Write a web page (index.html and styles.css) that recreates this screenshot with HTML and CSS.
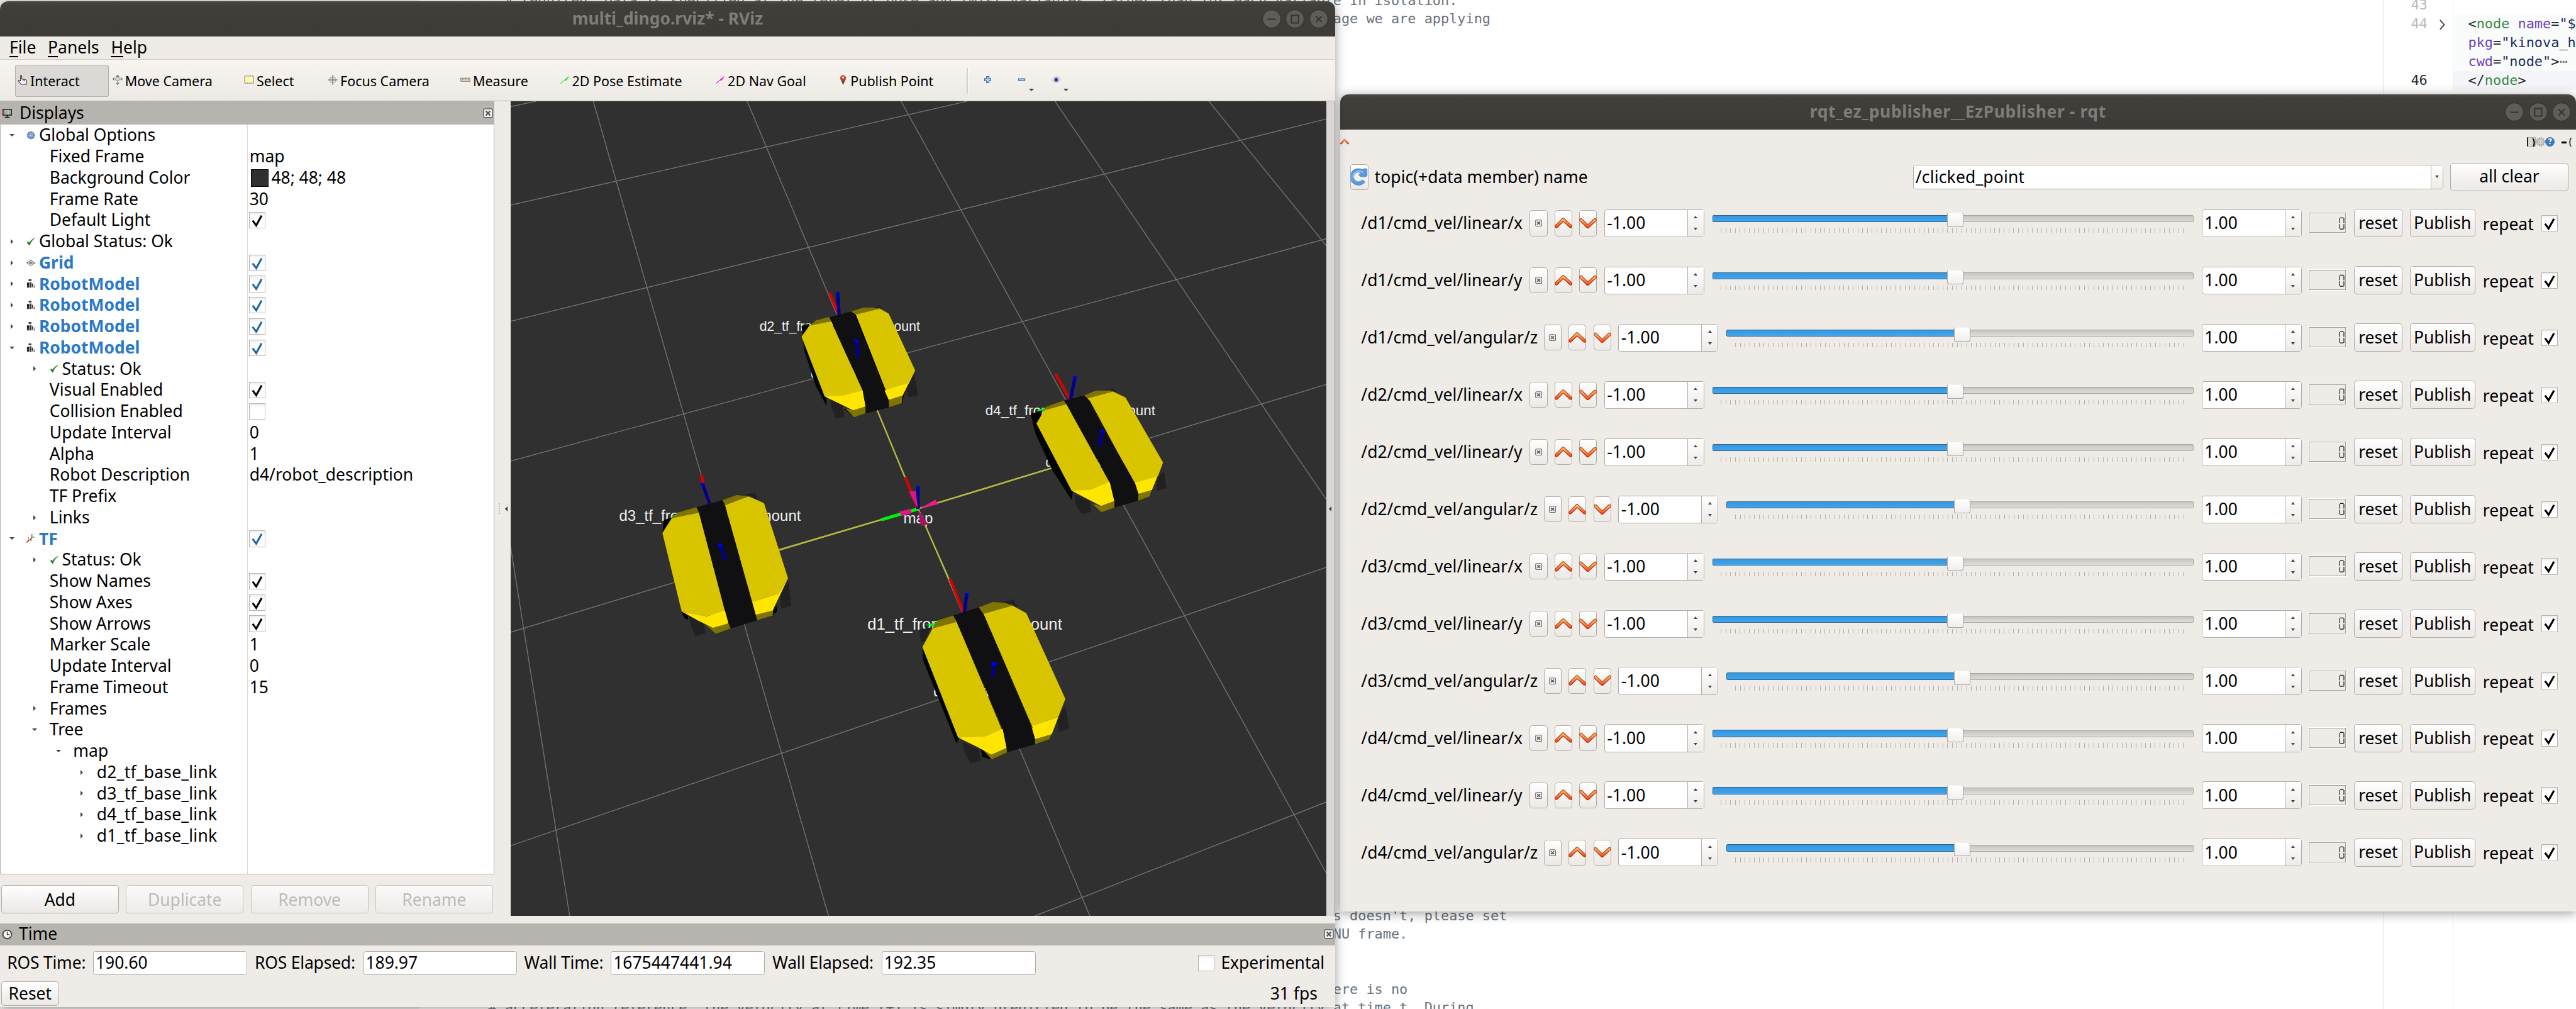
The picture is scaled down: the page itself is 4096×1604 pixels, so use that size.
FILE: index.html
```html
<!DOCTYPE html>
<html lang="en">
<head>
<meta charset="utf-8">
<title>Desktop</title>
<link rel="stylesheet" href="styles.css">
</head>
<body>
<svg class="defs" width="0" height="0">
  <defs>
    <linearGradient id="orange" x1="0" y1="0" x2="0" y2="1"><stop offset="0" stop-color="#c4561f"/><stop offset="1" stop-color="#cf2f10"/></linearGradient>
    <linearGradient id="orangeIn" x1="0" y1="0" x2="0" y2="1"><stop offset="0" stop-color="#f3b878"/><stop offset="1" stop-color="#ea6a2c"/></linearGradient>
    <linearGradient id="pin" x1="0" y1="0" x2="0" y2="1"><stop offset="0" stop-color="#ef5b45"/><stop offset="1" stop-color="#4d3a1c"/></linearGradient>
    <linearGradient id="refresh" x1="0" y1="0" x2="0" y2="1"><stop offset="0" stop-color="#4f8fd0"/><stop offset=".5" stop-color="#6ea9e0"/><stop offset="1" stop-color="#5a97d4"/></linearGradient>
    <linearGradient id="screen"><stop offset="0" stop-color="#c07070"/><stop offset=".35" stop-color="#d7a0a0"/><stop offset=".36" stop-color="#6fc07a"/><stop offset=".66" stop-color="#a8d8ac"/><stop offset=".67" stop-color="#8f8fe0"/><stop offset="1" stop-color="#b8b8ee"/></linearGradient>
  </defs>
  <symbol id="check" viewBox="0 0 28 28"><path d="M5.5 14.5l6.500 9L22 5.500" fill="none" stroke="currentColor" stroke-width="3.600"/></symbol>
  <symbol id="up" viewBox="0 0 30 30"><path d="M3 20L14.500 8.500 27 20" fill="none" stroke="url(#orange)" stroke-width="6" stroke-linecap="round" stroke-linejoin="round"/><path d="M3 19.500L14.500 8.500 27 19.500" fill="none" stroke="url(#orangeIn)" stroke-width="3" stroke-linecap="round" stroke-linejoin="round"/></symbol>
  <symbol id="down" viewBox="0 0 30 30"><path d="M3 9L14.500 20.500 27 9" fill="none" stroke="url(#orange)" stroke-width="6" stroke-linecap="round" stroke-linejoin="round"/><path d="M3 9L14.500 20 27 9" fill="none" stroke="url(#orangeIn)" stroke-width="3" stroke-linecap="round" stroke-linejoin="round"/></symbol>
  <symbol id="close" viewBox="0 0 12 12"><rect x=".8" y=".8" width="10.400" height="10.400" rx="1.500" fill="#f4f2ef" stroke="#666" stroke-width="1.200"/><path d="M3.500 3.500l5 5m0-5l-5 5" stroke="#555" stroke-width="1.800"/></symbol>
  <symbol id="gear" viewBox="0 0 16 16"><circle cx="8" cy="8" r="6.200" fill="#8db0dc" stroke="#3f6cae" stroke-width="2" stroke-dasharray="2 1.250"/><circle cx="8" cy="8" r="4.800" fill="#9fbfe6" stroke="#4b78b8"/><circle cx="8" cy="8" r="2" fill="#dfeafa" stroke="#3f6cae"/></symbol>
  <symbol id="ok" viewBox="0 0 16 16"><path d="M1.500 10l4 5Q8 7 15 1.500 8 5 5 10.500L3 8z" fill="#1c7d20" stroke="#1c7d20" stroke-width=".8"/></symbol>
  <symbol id="grid" viewBox="0 0 16 16"><path d="M1 8l7-4.500L15 8l-7 4.500zM4.500 5.700l7 4.600M11.500 5.700l-7 4.600" fill="none" stroke="#555" stroke-width="1.200"/></symbol>
  <symbol id="robot" viewBox="0 0 16 16"><path d="M4 0h5v3H4zM1 6h4v9H1zM6 5h3v10H6zM10 7l2 1v6h-2z" fill="#333"/><path d="M4.500 0h4v1.500h-4z" fill="#2b3aa0"/><path d="M12 14l2 1 2-6" fill="none" stroke="#333"/><path d="M2 7h2v3H2z" fill="#000"/></symbol>
  <symbol id="tf" viewBox="0 0 16 16"><path d="M4 11V5" stroke="#8080f0"/><path d="M10 6V0" stroke="#2a2ad0" stroke-width="1.200"/><path d="M10 5.500h6M4 11.500h6" stroke="#20e020" stroke-width="1.300"/><path d="M9 6.500l-4 4.500" stroke="#e8d020" stroke-width="1.600"/><path d="M4.500 11L0 15.500M10.500 5.500l-3.500 5" stroke="#e01818" stroke-width="1.800"/></symbol>
</svg>

<div class="desktop">
  <div class="backdrop">
    <div class="yaml">
<pre class="yaml-text yaml-top">  # required. Data is specified at the level of pose and twist variables, rather than for each variable in isolation.
  # For messages that have both pose and twist data, the parameter specifies to which part of the message we are applying</pre>
<pre class="yaml-text yaml-bottom">   # [ADVANCED]  Some IMUs automatically remove acceleration due to gravity, and others don't. If yours doesn't, please set
#     this to true, and *make sure* your data conforms to REP-103, specifically, that the data is in ENU frame.


# [ADVANCED]  The EKF and UKF models follow a standard predict/correct cycle. During prediction, if there is no
# acceleration reference, the velocity at time t+1 is simply predicted to be the same as the velocity at time t. During</pre>
    </div>
    <div class="xml">
      <div class="gutter"><span>43</span><span>44</span><span></span><span></span><span class="cur">46</span></div>
      <div class="fold"><svg width="14" height="20" viewBox="0 0 14 20"><path d="M3 2l7 8-7 8" fill="none" stroke="#444" stroke-width="2"/></svg></div>
      <div class="code">
        <div class="line">&nbsp;</div>
        <div class="line folded">&lt;<i>node</i> <b>name</b>=<s>"$(</s></div>
        <div class="line folded"><b>pkg</b>=<s>"kinova_h</s></div>
        <div class="line folded"><b>cwd</b>=<s>"node"</s>&gt;<em>⋯</em></div>
        <div class="line current">&lt;/<i>node</i>&gt;</div>
      </div>
    </div>
  </div>

  <section class="window rqt">
    <header class="titlebar"><h1>rqt_ez_publisher__EzPublisher - rqt</h1><div class="controls"></div></header>
    <div class="rqt-tools">
      <svg width="15" height="16" viewBox="0 0 30 30" preserveAspectRatio="none"><use href="#up"/></svg>
      <div class="dock-icons">
        <span class="dock-d">)</span>
        <svg width="16" height="16" viewBox="0 0 16 16"><circle cx="8" cy="8" r="6.500" fill="#d5d5d3" stroke="#a5a5a3" stroke-width="2.500" stroke-dasharray="2.200 1.200"/><circle cx="8" cy="8" r="4.500" fill="#dcdcda" stroke="#aaa"/><circle cx="8" cy="8" r="1.800" fill="#eee" stroke="#999"/></svg>
        <span class="help">?</span>
        <span class="dash"></span><span class="paren">(</span>
      </div>
    </div>
    <div class="topic-row">
      <button class="icon-btn"><svg width="30" height="32" viewBox="0 0 30 32"><path d="M23 22.500A11 11 0 1 1 21 8" fill="none" stroke="url(#refresh)" stroke-width="7"/><path d="M15 14.500q-2-4 2-4.500l4-1.500-1-5 4.500-2 4.500 1v12q-1 2-4 2h-7z" fill="#5a99d6"/><path d="M22 9a10 10 0 0 0-17 8" fill="none" stroke="#9cc6ee" stroke-width="2"/></svg></button>
      <span class="topic-label">topic(+data member) name</span>
      <div class="combo"><span>/clicked_point</span><i class="drop"></i></div>
      <button class="btn clear">all clear</button>
    </div>
    <div class="sliders" id="sliders"></div>
  </section>

  <section class="window rviz">
    <header class="titlebar"><h1>multi_dingo.rviz* - RViz</h1><div class="controls"></div></header>
    <nav class="menu"><span><u>F</u>ile</span><span><u>P</u>anels</span><span><u>H</u>elp</span></nav>
    <div class="toolbar">
      <div class="tool active"><svg width="17" height="17" viewBox="0 0 17 17"><path d="M5 10V1.500q1-1.500 2 0V7l7 1.500q1 0 1 2V16H6L1.500 10.500q0-2 2-.5z" fill="#fff" stroke="#333" stroke-width="1.200"/><path d="M9.500 7.500v3M12 8v3" stroke="#333"/></svg>Interact</div>
      <div class="tool"><svg width="17" height="17" viewBox="0 0 17 17"><path d="M8.500 1v15M1 7h15M6 3.500l2.500-3 2.500 3M6 13.500l2.500 3 2.500-3M3 4.500L.5 7 3 9.500M14 4.500L16.500 7 14 9.500" fill="none" stroke="#777" stroke-width="1.200"/><circle cx="8.500" cy="7" r="3.500" fill="#ddd" stroke="#888"/></svg>Move Camera</div>
      <div class="tool"><svg width="17" height="17" viewBox="0 0 17 17"><rect x="1" y="2" width="15" height="12" fill="#fdf6b4" stroke="#444" stroke-dasharray="2 1"/></svg>Select</div>
      <div class="tool"><svg width="17" height="17" viewBox="0 0 17 17"><path d="M8.500 0v17M0 8.500h17" stroke="#888" stroke-width="1.600"/><circle cx="8.500" cy="8.500" r="5" fill="none" stroke="#999" stroke-width="1.500"/><circle cx="8.500" cy="8.500" r="2" fill="#888"/></svg>Focus Camera</div>
      <div class="tool"><svg width="17" height="17" viewBox="0 0 17 17"><rect x=".7" y="5.500" width="15.500" height="5.500" fill="#e4dcb4" stroke="#777"/><path d="M3.500 6v3M6 6v2M8.500 6v3M11 6v2M13.500 6v3" stroke="#777"/></svg>Measure</div>
      <div class="tool"><svg width="17" height="17" viewBox="0 0 17 17"><path d="M1 14.500L16.500 1 11 10l-2-1-7 6z" fill="#12ea28"/></svg>2D Pose Estimate</div>
      <div class="tool"><svg width="17" height="17" viewBox="0 0 17 17"><path d="M1 14.500L16.500 1 11 10l-2-1-7 6z" fill="#f012d8"/></svg>2D Nav Goal</div>
      <div class="tool pub"><svg width="15" height="17" viewBox="0 0 15 17"><path d="M7 17L2.500 7.500A5 5 0 1 1 11.500 7.500z" fill="url(#pin)"/><circle cx="7" cy="4.500" r="1.500" fill="#fff"/></svg>Publish Point</div>
      <i class="sep"></i>
      <div class="tool small"><svg width="12" height="12" viewBox="0 0 12 12"><path d="M4 .7h4V4h3.300v4H8v3.300H4V8H.7V4H4z" fill="#a9cdf0" stroke="#3568ac" stroke-width="1.300"/></svg></div>
      <div class="tool small more"><svg width="12" height="12" viewBox="0 0 12 12"><rect x=".7" y="4.500" width="10.600" height="3" fill="#a9cdf0" stroke="#3568ac" stroke-width="1.300"/></svg></div>
      <div class="tool small more"><svg width="16" height="12" viewBox="0 0 16 12"><path d="M.5 6Q8-4 15.500 6 8 15 .5 6z" fill="#f0f0f0" stroke="#aaa"/><circle cx="8" cy="6" r="3.700" fill="#5a70c0"/><circle cx="8" cy="6" r="1.600" fill="#101030"/></svg></div>
    </div>
    <div class="work">
      <div class="displays">
        <div class="dock-title"><svg width="16" height="17" viewBox="0 0 16 17"><rect x=".8" y="1.800" width="14.400" height="10" fill="url(#screen)" stroke="#111" stroke-width="1.400"/><path d="M8 12v3M4 15.500h8" stroke="#111" stroke-width="1.600"/></svg><span>Displays</span><svg class="x" width="17" height="17"><use href="#close"/></svg></div>
        <div class="tree" id="tree"></div>
        <div class="tree-buttons"><button class="btn">Add</button><button class="btn" disabled>Duplicate</button><button class="btn" disabled>Remove</button><button class="btn" disabled>Rename</button></div>
      </div>
      <div class="splitter"><i class="dots"></i><i class="tri-left"></i></div>
      <svg class="view" width="1383" height="1381" viewBox="866 172 1383 1381">
        <g stroke="#727272" stroke-width="1.500" fill="none">
          <path d="M745 172L966 1553M1006 172L1405 1553M1267 172L1848 1553M1528 172L2289 1553M1789 172L2249 847M2050 172L2250 418"/>
          <path d="M866 181L909 172M866 348L1640 172M866 545L2249 202M866 782L2249 405M866 1072L2249 652M866 1434L2249 962M1755 1553L2249 1360"/>
        </g>
        <g class="labels">
          <text x="1288" y="561" font-size="24" textLength="272" lengthAdjust="spacingAndGlyphs">d2_tf_front_bumper_mount</text>
          <text x="1671" y="704" font-size="24" textLength="288" lengthAdjust="spacingAndGlyphs">d4_tf_front_bumper_mount</text>
          <text x="1050" y="883" font-size="25.500" textLength="308" lengthAdjust="spacingAndGlyphs">d3_tf_front_bumper_mount</text>
          <text x="1471" y="1068" font-size="27" textLength="330" lengthAdjust="spacingAndGlyphs">d1_tf_front_bumper_mount</text>
          <text x="1532" y="888" font-size="26" textLength="50" lengthAdjust="spacingAndGlyphs">map</text>
          <text x="1375" y="641" font-size="24" textLength="140" lengthAdjust="spacingAndGlyphs">d2_tf_base_link</text>
          <text x="1773" y="792" font-size="24" textLength="150" lengthAdjust="spacingAndGlyphs">d4_tf_base_link</text>
          <text x="1583" y="1181" font-size="26" textLength="170" lengthAdjust="spacingAndGlyphs">d1_tf_base_link</text>
        </g>
        <g transform="translate(1000 440) scale(.81633 .57398)">
          <g stroke="#b9b840" stroke-width="3.500" fill="none"><path d="M597 445L682 737L782 1060" stroke-width="3.200"/><path d="M393 858L682 737L965 614" stroke-width="4.500"/></g>
          <g class="ink">
            <path d="M606 769L682 737" stroke="#00f010" stroke-width="9"/>
            <path d="M655 643L682 737" stroke="#d80000" stroke-width="6"/>
            <path d="M682 673V737" stroke="#00008c" stroke-width="7"/><circle cx="682" cy="673" r="4" fill="#0000d8"/>
            <path d="M684 737l34-27 6 13z" fill="#f0188c"/><path d="M643 745l24-8 2 12-21 9z" fill="#e8148a"/>
            <path d="M663 686l14-2 5 53z" fill="#d81880"/><path d="M682 740l6 48 15-6z" fill="#a81068"/>
            <path d="M498 99L518 165M967 337L997 412M231 634L247 720M748 942L777 1046" stroke="#d80000" stroke-width="6"/>
            <path d="M930 444l20-6v16l-20-6zM168 758l24-6v16zM697 1080l25-8v14z" fill="#00f010"/>
            <path d="M515 99L518 165M1008 349L999 412M235 665L249 722M783 990L778 1046" stroke="#00008c" stroke-width="7"/>
            <g fill="#0000d8"><circle cx="515" cy="99" r="4"/><circle cx="1008" cy="349" r="4.500"/><circle cx="235" cy="665" r="4.500"/><circle cx="783" cy="990" r="4.500"/></g>
          </g>
          <g class="bot">
            <path class="k" d="M440 197L456 190 446 228 492 405 492 433 470 375 446 270zM528 440L549 448 549 466zM648 410L656 385 648 428z"/>
            <path class="w" d="M500 412L526 432 529 465 512 471 503 440zM655 372L674 340 682 402 662 408zM588 142L604 138 608 152z"/>
            <path class="y" d="M440 228L457 195 501 183 567 387 528 405 488 405zM548 164L602 145 621 160 676 328 662 368 612 387z"/>
            <path class="d" d="M457 196L470 180 498 170 501 183zM543 154L567 143 590 142 602 146 548 165zM531 440L547 446 573 433 573 454 549 466zM621 415L650 402 648 425 621 437z"/>
            <path class="b" d="M488 405L528 402 567 387 573 434 547 446 522 428zM612 387L661 366 676 328 650 402 621 415z"/>
            <path class="s" d="M498 171L543 154 548 164 612 387 621 415 622 437 573 455 573 434 567 387z"/>
            <path class="k" d="M543 154l5 10 64 223 3 0L553 164z"/>
          </g>
          <g class="bot">
            <path class="k" d="M916 457L940 446 932 485 1004 683 1001 711 960 620 926 515zM1140 690L1168 680 1163 700z"/>
            <path class="w" d="M1007 695L1038 712 1042 746 1022 753 1010 725zM1178 645L1193 626 1198 676 1178 684zM1066 386L1088 381 1095 395z"/>
            <path class="y" d="M928 485L945 444 990 427 1082 665 1040 690 1001 683zM1034 410L1087 390 1113 408 1191 600 1180 641 1132 662z"/>
            <path class="d" d="M936 456L950 434 985 417 990 428 945 446zM1027 402L1050 388 1080 387 1087 390 1034 411zM1044 722L1062 728 1090 714 1090 733 1063 747zM1139 692L1168 680 1163 700 1139 713z"/>
            <path class="b" d="M1001 683L1040 681 1080 657 1090 714 1062 728 1037 710zM1132 660L1179 641 1191 600 1168 681 1139 693z"/>
            <path class="s" d="M985 417L1027 402 1034 411 1132 660 1140 692 1139 713 1090 733 1090 716 1081 660 990 427z"/>
            <path class="k" d="M1027 402l7 9 98 249 5 16L1039 418z"/>
          </g>
          <g class="bot">
            <path class="k" d="M154 770L180 758 151 808zM189 1030L205 1045 204 1064 196 1060zM375 1056L388 1020 389 1040z"/>
            <path class="w" d="M206 1050L236 1072 240 1104 219 1113 210 1080zM395 985L412 945 419 1022 398 1032zM322 695L343 688 350 710z"/>
            <path class="y" d="M151 808L171 763 227 748 281 1040 240 1055 191 1040zM281 725L330 700 362 720 412 942 391 988 337 1012z"/>
            <path class="d" d="M163 778L182 748 222 732 227 748 171 765zM276 711L305 696 330 700 281 727zM240 1078L254 1087 290 1074 293 1090 262 1106zM344 1050L381 1036 380 1052 347 1066z"/>
            <path class="b" d="M191 1040L242 1055 281 1037 290 1074 256 1088 225 1067zM337 1012L391 988 412 942 380 1037 344 1050z"/>
            <path class="s" d="M222 732L276 711 281 727 345 1050 348 1066 293 1090 288 1074 227 748z"/>
          </g>
          <g class="bot">
            <path class="k" d="M691 1145L692 1182 762 1430 770 1412zM812 1445L836 1463 834 1477 816 1470zM955 1415L968 1370 958 1412z"/>
            <path class="w" d="M684 1095L708 1087 697 1128 688 1130zM774 1425L808 1448 812 1480 791 1488 780 1460zM970 1350L988 1320 996 1386 975 1396zM858 1011L880 1004 888 1028z"/>
            <path class="y" d="M691 1145L713 1088 762 1070 858 1395 820 1415 765 1412zM815 1047L875 1020 907 1045 988 1298 973 1352 917 1378z"/>
            <path class="d" d="M707 1100L722 1067 755 1052 762 1071 713 1090zM808 1028L838 1012 862 1015 880 1022 815 1048zM818 1450L834 1463 866 1443 867 1456 835 1477zM925 1417L960 1401 955 1417 925 1432z"/>
            <path class="b" d="M765 1412L820 1410 858 1387 866 1443 834 1463 805 1440zM917 1378L973 1352 988 1298 960 1402 925 1417z"/>
            <path class="s" d="M755 1052L808 1028 815 1047 917 1378 925 1417 925 1432 867 1456 866 1443 858 1387 762 1070z"/>
            <path class="k" d="M808 1028l7 19 102 331 5 12L819 1050z"/>
          </g>
          <g class="ink">
            <path d="M554 240L557 290M1065 506L1058 552M271 843L281 887M840 1193L837 1232" stroke="#00008c" stroke-width="7"/>
            <g fill="#0000d8"><circle cx="554" cy="241" r="5"/><circle cx="1065" cy="507" r="5"/><circle cx="271" cy="844" r="5.500"/><circle cx="840" cy="1194" r="6"/></g>
          </g>
        </g>
      </svg>
      <div class="edge"><i class="tri-left"></i></div>
    </div>
    <div class="dock-title time-title"><svg width="18" height="18" viewBox="0 0 18 18"><circle cx="9" cy="9" r="7.300" fill="#fff" stroke="#444" stroke-width="2"/><path d="M9 4v5.500h4" fill="none" stroke="#333" stroke-width="1.500"/></svg><span>Time</span><svg class="x" width="17" height="17"><use href="#close"/></svg></div>
    <div class="time-row">
      <label>ROS Time:</label><div class="field">190.60</div>
      <label>ROS Elapsed:</label><div class="field">189.97</div>
      <label>Wall Time:</label><div class="field">1675447441.94</div>
      <label>Wall Elapsed:</label><div class="field">192.35</div>
      <div class="experimental"><i class="box"></i>Experimental</div>
    </div>
    <div class="status"><button class="btn">Reset</button><span>31 fps</span></div>
  </section>
</div>
<script src="app.js"></script>
</body>
</html>
```
FILE: styles.css
```css
* { box-sizing: border-box; }
body { margin: 0; overflow: hidden; background: #fff; }
.defs { position: absolute; }
.desktop {
  zoom: 0.93773;
  position: relative;
  width: 4368px;
  height: 1711px;
  overflow: hidden;
  font: 28.2px/36px "Noto Sans", sans-serif;
  color: #000;
}
i, em, s { font-style: normal; text-decoration: none; }
svg { flex: none; display: block; }

/* editor behind the windows */
.backdrop { display: flex; height: 100%; font: 23.35px/31.2px "DejaVu Sans Mono", monospace; color: #6a737d; }
.yaml { flex: none; width: 4042px; padding: 0 0 0 828px; display: flex; flex-direction: column; justify-content: space-between; box-shadow: inset 710px 0 #eef0f1; }
.yaml-text { margin: 0; font: inherit; }
.yaml-top { margin-top: -15px; }
.yaml-bottom { margin-bottom: -13px; }
.xml { display: flex; flex: 1; overflow: hidden; border-left: 2px solid #dcdee0; line-height: 32px; }
.gutter { flex: none; width: 73px; display: flex; flex-direction: column; text-align: right; color: #b9bbbd; margin-top: -7px; }
.gutter span { height: 32px; }
.gutter .cur { color: #24292e; }
.fold { flex: none; width: 43px; padding: 32px 0 0 18px; }
.code { flex: 1; overflow: hidden; margin-top: -7px; border-left: 2px solid #f0f1f2; color: #24292e; }
.line { height: 32px; padding-left: 25px; white-space: pre; }
.line.folded { background: #fafbfb; }
.line.current { background: #f3f5f8; }
.line i { color: #3f8a46; }
.line b { color: #6f42c1; font-weight: normal; }
.line s { color: #1c2f5e; }
.line em { color: #777; }

/* windows */
.window { position: absolute; background: #efebe7; box-shadow: 0 3px 18px rgba(0,0,0,.38); border-radius: 14px 14px 0 0; display: flex; flex-direction: column; }
.rviz { left: 0; top: 2px; width: 2264px; height: 1705px; }
.rqt { left: 2272px; top: 160px; width: 2096px; height: 1385px; }
.titlebar { flex: none; height: 60px; border-radius: 14px 14px 0 0; background: linear-gradient(#4a4943, #403f3a 10%, #3c3b37); display: flex; align-items: center; justify-content: center; position: relative; }
.titlebar h1 { margin: 0; font-size: 28.2px; font-weight: bold; color: #807d78; }
.rqt .titlebar h1 { letter-spacing: .65px; }
.controls { position: absolute; right: 8px; display: flex; gap: 8px; }
.rviz .controls { right: 12px; }
.controls svg { width: 32px; height: 32px; }

.btn, .icon-btn { font: inherit; color: inherit; padding: 0; border: 2px solid #b0aca8; border-radius: 5px; background: linear-gradient(#fff, #ebe8e5); display: flex; align-items: center; justify-content: center; flex: none; }
.btn:disabled { color: #bdbbb9; border-color: #c6c3c0; background: linear-gradient(#fbfaf9, #eeebe8); }
.box { display: block; flex: none; width: 28px; height: 28px; border: 1.5px solid #b8b5b2; background: linear-gradient(#eee, #fff 25%); color: #000; }
.box svg { width: 100%; height: 100%; }

/* rviz */
.menu { flex: none; height: 39px; padding-left: 16px; display: flex; gap: 20px; border-bottom: 2px solid #d3cec9; align-items: center; }
.menu u { text-underline-offset: 4px; text-decoration-thickness: 2px; }
.toolbar { flex: none; height: 71px; padding: 2px 0 0 26px; display: grid; grid-template-columns: 160px 223px 142px 225px 168px 264px 210px 221px 7px 58px 58px 58px; align-items: center; background: linear-gradient(#f8f5f0, #edeae6); border-bottom: 2px solid #b5b0ab; font-size: 22.9px; }
.tool { height: 55px; display: flex; align-items: center; gap: 4px; padding-left: 5px; white-space: nowrap; }
.tool svg { margin-top: -4px; }
.tool.active { width: 158px; border: 1.5px solid #b3afab; border-radius: 3px; background: #dcd8d5; padding-left: 3px; }
.sep { width: 2px; height: 43px; background: #d3cfcb; box-shadow: 1px 0 #fff; }
.tool.small { padding: 0; justify-content: center; position: relative; }
.more::after { content: ""; position: absolute; left: 41px; top: 41px; border: 4.500px solid transparent; border-top: 5px solid #444; border-bottom: 0; }
.work { flex: none; height: 1381px; display: flex; }
.displays { flex: none; width: 838px; display: flex; flex-direction: column; }
.dock-title { flex: none; height: 39px; background: #b7b3af; display: flex; align-items: center; padding: 0 2px 0 4px; gap: 13px; }
.dock-title .x { margin-left: auto; }
.tree { height: 1271px; background: #fff; border: solid #b5b1ad; border-width: 0 1.500px 1.500px; display: grid; grid-template-columns: 418px 1fr; grid-auto-rows: 36px; position: relative; align-content: start; }
.name, .value { display: flex; align-items: center; white-space: nowrap; }
.name { position: relative; }
.value { padding: 1px 0 0 4px; }
.name { padding-top: 1px; }
.tree::before { content: ""; position: absolute; left: 418px; top: 0; bottom: 0; width: 1.500px; background: #dcdad8; }
.exp { flex: none; width: 18px; margin-right: 16px; display: flex; justify-content: center; align-items: center; }
.exp.open::before { content: ""; border: 5px solid transparent; border-top: 5px solid #444; border-bottom: 0; }
.exp.shut::before { content: ""; border: 5px solid transparent; border-left: 5px solid #444; border-right: 0; }
.name svg { margin-right: 6px; }
.lv0 { padding-left: 10px; } .lv1 { padding-left: 49px; } .lv2 { padding-left: 89px; } .lv3 { padding-left: 129px; letter-spacing: .25px; }
.hot { color: #2a78c8; font-weight: bold; font-size: 28.200px; }
.value.hot .box { color: #1f66a8; }
.value .box { margin-left: -1px; }
.swatch { width: 30px; height: 30px; margin: 0 5px 0 2px; background: #303030; border: 1.500px solid #000; }
.tree-buttons { display: flex; gap: 12px; padding: 19px 2px 0; }
.tree-buttons .btn { flex: 1; height: 48px; padding-top: 1px; }
.splitter { width: 28px; position: relative; display: flex; align-items: center; justify-content: flex-end; gap: 9px; padding-right: 5px; }
.dots { width: 2px; height: 18px; background: repeating-linear-gradient(#b5b1ad 0 2px, transparent 2px 4px); }
.tri-left { border: 5px solid transparent; border-right: 5px solid #333; border-left: 0; }
.view { background: #303030; }
.labels { fill: #f0f0f0; font-family: "Liberation Sans", sans-serif; }
.y { fill: #d8c500; } .d { fill: #807400; } .b { fill: #ffe600; } .s { fill: #101012; } .k { fill: #030404; } .w { fill: #212121; }
.edge { width: 15px; background: #dcd7d4; border-right: 1.500px solid #9c9894; display: flex; align-items: center; justify-content: center; border-radius: 3px; }
.time-title { margin-top: 12px; height: 38px; gap: 11px; padding-left: 3px; }
.time-row { flex: none; height: 58px; padding: 9px 18px 0 12px; display: grid; grid-template-columns: 146px 261px 13px 184px 261px 12px 147px 261px 13px 185px 261px 1fr; }
.time-row > * { height: 41px; display: flex; align-items: center; white-space: nowrap; padding-top: 1px; }
.time-row label:nth-of-type(1) { grid-column: 1; } .time-row label:nth-of-type(2) { grid-column: 4; }
.time-row label:nth-of-type(3) { grid-column: 7; } .time-row label:nth-of-type(4) { grid-column: 10; }
.time-row label { letter-spacing: -.2px; }
.time-row .field { background: #fff; border: 2px solid #b0aca8; border-radius: 4px; padding-left: 3px; }
.experimental { justify-content: flex-end; gap: 11px; }
.status { display: flex; justify-content: space-between; align-items: center; padding: 3px 30px 0 2px; }
.status .btn { width: 98px; height: 41px; }

/* rqt publisher */
.rqt-tools { height: 40px; padding-right: 4px; display: flex; align-items: center; justify-content: space-between; }
.dock-icons { display: flex; align-items: center; height: 16px; font-size: 17px; line-height: 16px; overflow: hidden; }
.dock-d { width: 15px; height: 16px; border: 1px solid #b3afab; border-left: 3px solid #222; background: #dcd8d5; text-align: right; font-weight: bold; }
.help { width: 16px; height: 16px; margin-right: 11px; border-radius: 50%; background: #3d7cb8; color: #fff; font-size: 13px; font-weight: bold; text-align: center; line-height: 15px; }
.dash { width: 9px; height: 4px; margin-top: 3px; background: #000; }
.paren { width: 8px; margin-left: 4px; }
.topic-row { flex: none; height: 80px; padding: 0 13px 0 18px; display: flex; align-items: center; }
.icon-btn { width: 30px; height: 44px; }
.topic-label { width: 913px; margin-left: 11px; padding-top: 1px; }
.combo { flex: 1; height: 42px; background: #fff; border: 2px solid #b0aca8; border-radius: 4px; display: flex; justify-content: space-between; align-items: center; padding-left: 3px; }
.combo span { padding-top: 1px; letter-spacing: .2px; }
.drop { width: 20px; height: 100%; border-left: 1.500px solid #b5b1ad; background: linear-gradient(#fff, #eeebe8); display: flex; align-items: center; justify-content: center; }
.drop::before { content: ""; border: 4px solid transparent; border-top: 5px solid #444; border-bottom: 0; }
.clear { width: 200px; height: 48px; margin-left: 12px; }
.sliders { padding: 0 31px 0 36px; margin-top: -10px; }
.srow { height: 97px; display: flex; align-items: center; gap: 12px; }
.topic { flex: none; width: 274px; white-space: nowrap; letter-spacing: .05px; padding-top: 1px; }
.wide .topic { width: 298px; }
.spin { flex: none; width: 170px; height: 47px; background: #fff; border: 2px solid #b0aca8; border-radius: 4px; display: flex; justify-content: space-between; align-items: center; padding-left: 4px; }
.spin span { padding-top: 1px; }
.arrows { width: 28px; height: 100%; border-left: 1.500px solid #b5b1ad; background: linear-gradient(#fff, #edeae7); display: flex; flex-direction: column; align-items: center; justify-content: center; gap: 16px; }
.arrows::before { content: ""; border: 4px solid transparent; border-bottom: 5px solid #444; border-top: 0; }
.arrows::after { content: ""; border: 4px solid transparent; border-top: 5px solid #444; border-bottom: 0; }
.slider { flex: 1; height: 35px; margin: 0 1px 0 2px; position: relative; display: flex; flex-direction: column; }
.groove { margin-top: 4px; height: 12px; border: 1.500px solid #aaa6a2; border-radius: 2px; background: linear-gradient(#c6c3c0, #dfdcd9); }
.fill { height: 12px; margin: -1.500px; border: 1.500px solid #2a6796; border-radius: 2px 0 0 2px; background: linear-gradient(#3a94d8, #3ea6f0); }
.knob { position: absolute; top: 0; width: 28px; height: 24px; margin-left: -14px; background: linear-gradient(#fff, #f1efed); border: 1.500px solid #aaa6a2; border-top-color: #f0f0f0; border-radius: 3px; }
.ticks { height: 8px; margin: 10px 13px 0 14px; background: repeating-linear-gradient(90deg, #b4b0ac 0 1.400px, transparent 1.400px 8px); }
.lcd { flex: none; width: 64px; height: 35px; border: 1.500px solid; border-color: #a39f9b #fff #fff #a39f9b; box-shadow: inset -1px -1px #a39f9b, -1px -1px #fff; display: flex; align-items: center; justify-content: flex-end; padding-right: 2px; }
.reset { width: 83px; height: 48px; }
.publish { width: 111px; height: 48px; }
.repeat { width: 87px; padding-top: 4px; margin-left: 1px; }
```
FILE: app.js
```js
const use = (id, size) => `<svg width="${size}" height="${size}"><use href="#${id}"/></svg>`;
const ON = `<i class="box">${use('check', 25)}</i>`;
const OFF = '<i class="box"></i>';

// [level, expander, icon, name, value, highlighted]
const rows = [
  [0, 'open', 'gear', 'Global Options', ''],
  [1, '', '', 'Fixed Frame', 'map'],
  [1, '', '', 'Background Color', '<i class="swatch"></i>48; 48; 48'],
  [1, '', '', 'Frame Rate', '30'],
  [1, '', '', 'Default Light', ON],
  [0, 'shut', 'ok', 'Global Status: Ok', ''],
  [0, 'shut', 'grid', 'Grid', ON, 1],
  [0, 'shut', 'robot', 'RobotModel', ON, 1],
  [0, 'shut', 'robot', 'RobotModel', ON, 1],
  [0, 'shut', 'robot', 'RobotModel', ON, 1],
  [0, 'open', 'robot', 'RobotModel', ON, 1],
  [1, 'shut', 'ok', 'Status: Ok', ''],
  [1, '', '', 'Visual Enabled', ON],
  [1, '', '', 'Collision Enabled', OFF],
  [1, '', '', 'Update Interval', '0'],
  [1, '', '', 'Alpha', '1'],
  [1, '', '', 'Robot Description', 'd4/robot_description'],
  [1, '', '', 'TF Prefix', ''],
  [1, 'shut', '', 'Links', ''],
  [0, 'open', 'tf', 'TF', ON, 1],
  [1, 'shut', 'ok', 'Status: Ok', ''],
  [1, '', '', 'Show Names', ON],
  [1, '', '', 'Show Axes', ON],
  [1, '', '', 'Show Arrows', ON],
  [1, '', '', 'Marker Scale', '1'],
  [1, '', '', 'Update Interval', '0'],
  [1, '', '', 'Frame Timeout', '15'],
  [1, 'shut', '', 'Frames', ''],
  [1, 'open', '', 'Tree', ''],
  [2, 'open', '', 'map', ''],
  [3, 'shut', '', 'd2_tf_base_link', ''],
  [3, 'shut', '', 'd3_tf_base_link', ''],
  [3, 'shut', '', 'd4_tf_base_link', ''],
  [3, 'shut', '', 'd1_tf_base_link', ''],
];
document.getElementById('tree').innerHTML = rows.map(([lv, exp, icon, name, value, hot]) =>
  `<div class="name lv${lv}${hot ? ' hot' : ''}"><i class="exp ${exp}"></i>${icon ? use(icon, 15) : ''}${name}</div>` +
  `<div class="value${hot ? ' hot' : ''}">${value}</div>`).join('');

const topics = ['d1', 'd2', 'd3', 'd4'].flatMap(d => ['linear/x', 'linear/y', 'angular/z'].map(t => `/${d}/cmd_vel/${t}`));
const spin = v => `<div class="spin"><span>${v}</span><i class="arrows"></i></div>`;
const lcd = '<svg width="10" height="22" viewBox="0 0 10 22"><path d="M1.500 2v8M8.500 2v8M1.500 12v8M8.500 12v8M2 1.500h6M2 20.500h6" stroke="#111" stroke-width="1.300"/></svg>';
document.getElementById('sliders').innerHTML = topics.map(t => `
  <div class="srow${t.endsWith('z') ? ' wide' : ''}">
    <span class="topic">${t}</span>
    <button class="icon-btn">${use('close', 12)}</button>
    <button class="icon-btn">${use('up', 30)}</button>
    <button class="icon-btn">${use('down', 30)}</button>
    ${spin('-1.00')}
    <div class="slider"><div class="groove"><div class="fill" style="width:50%"></div></div><i class="knob" style="left:50.400%"></i><div class="ticks"></div></div>
    ${spin('1.00')}
    <div class="lcd">${lcd}</div>
    <button class="btn reset">reset</button>
    <button class="btn publish">Publish</button>
    <span class="repeat">repeat</span>
    ${ON}
  </div>`).join('');

const glyphs = ['M9 16.500h14', 'M10 10h12v13H10z', 'M11 11.500l10 10M21 11.500l-10 10'];
document.querySelectorAll('.controls').forEach(c => {
  c.innerHTML = glyphs.map(g => `<svg viewBox="0 0 32 32"><circle cx="16" cy="16" r="15.300" fill="#5f5d57" stroke="#35342f" stroke-width="1.200"/><path d="${g}" fill="none" stroke="#35342f" stroke-width="2.200"/></svg>`).join('');
});
```
